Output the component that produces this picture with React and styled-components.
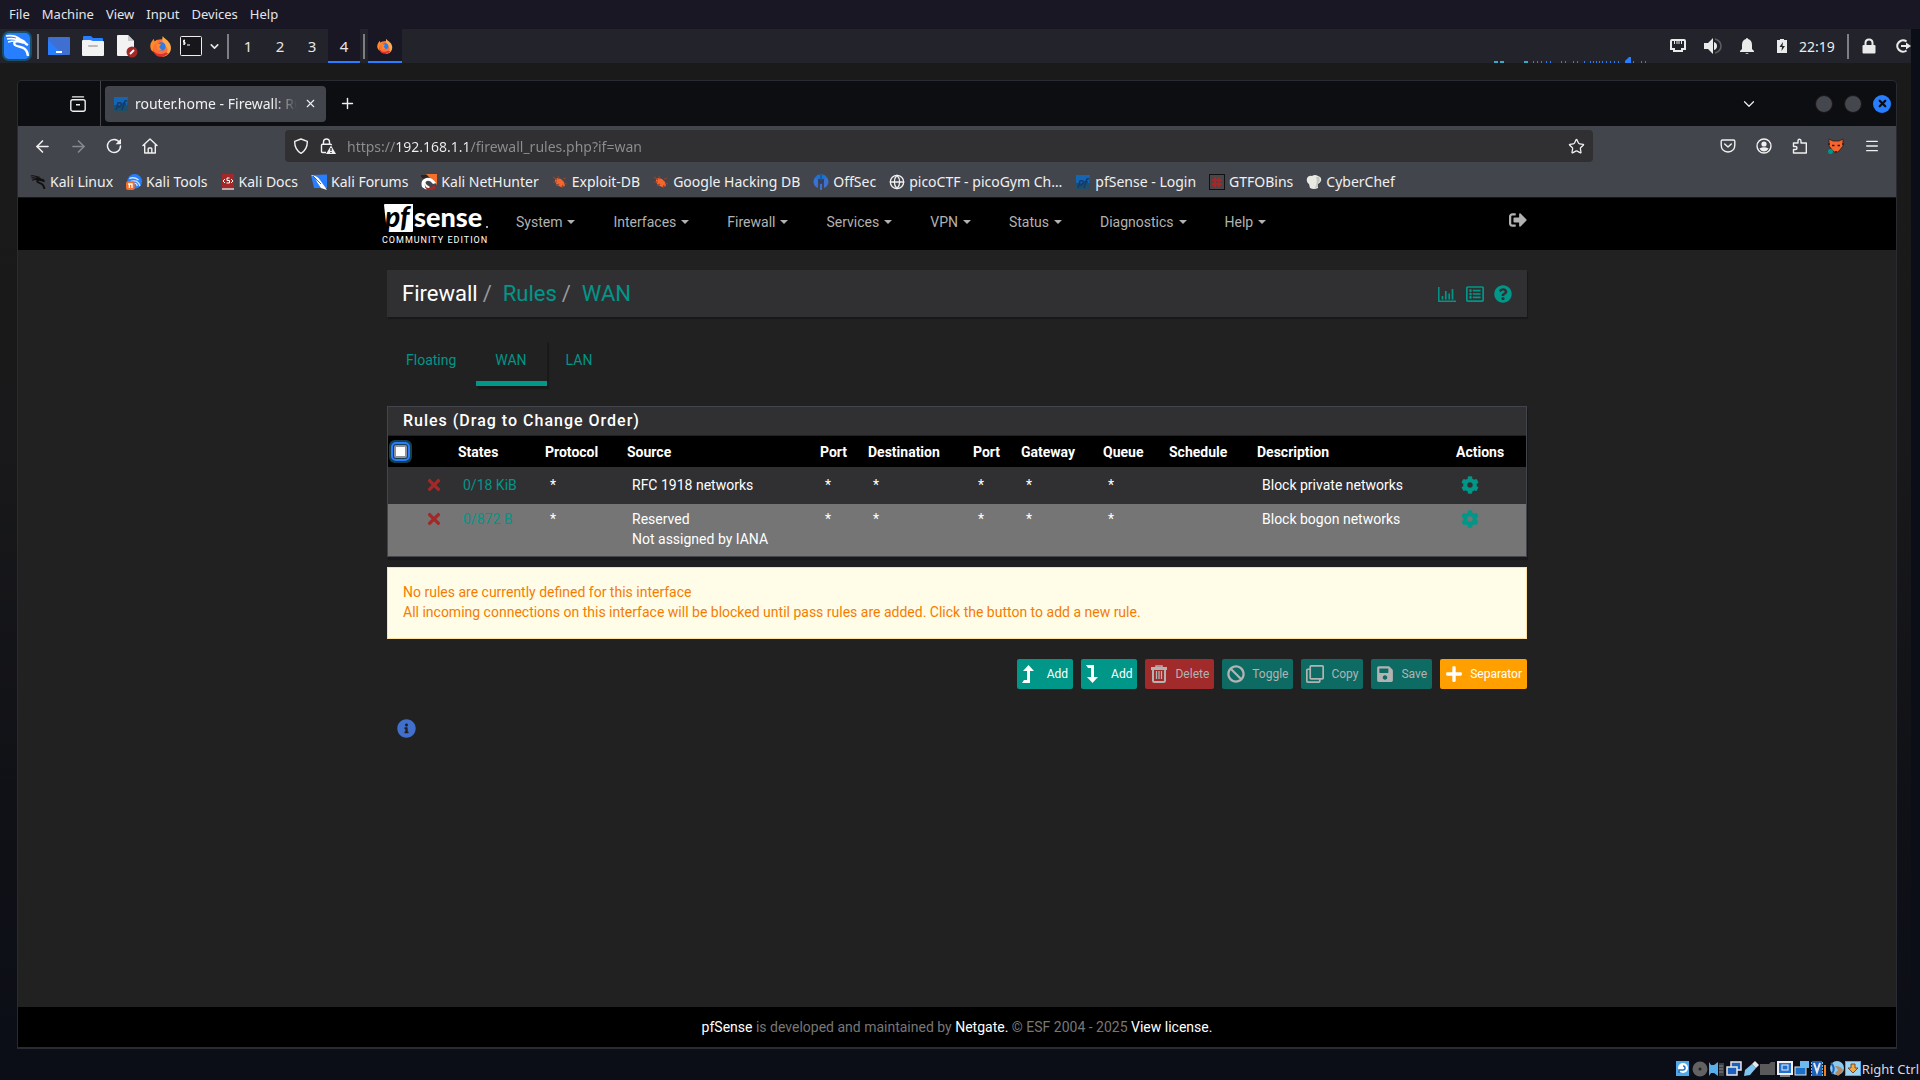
import React, { useState } from "react";
import styled, { createGlobalStyle } from "styled-components";
import {
  FaBan,
  FaCog,
  FaInfoCircle,
  FaPlus,
  FaQuestionCircle,
  FaRegClone,
  FaRegListAlt,
  FaSave,
  FaSignOutAlt,
  FaTimes,
} from "react-icons/fa";
import {
  ArrowLeft,
  ArrowRight,
  ChevronDown,
  Globe,
  Menu,
  Plus,
  Star,
  X,
} from "lucide-react";

const ui = `"Noto Sans", "Open Sans", sans-serif`;
const teal = "#009688";

const GlobalStyle = createGlobalStyle`
  * {
    box-sizing: border-box;
  }
  body {
    margin: 0;
    background: #0c0e17;
    font-family: ${ui};
  }
  button {
    font-family: inherit;
    border: 0;
    padding: 0;
    background: none;
    color: inherit;
  }
  a {
    text-decoration: none;
    color: inherit;
  }
`;

const Host = styled.div`
  display: flex;
  flex-direction: column;
  min-height: 100vh;
`;

const MenuBar = styled.nav`
  display: flex;
  gap: 12px;
  align-items: center;
  height: 29px;
  padding: 0 9px 2px;
  background: #191724;
  color: #e4e4e8;

  button {
    font-size: 13px;
  }
`;

const Guest = styled.div`
  display: flex;
  flex-direction: column;
  flex: 1;
  margin-right: 9px;
  background: linear-gradient(#1a1a1a, #19191b 40%, #101116 75%, #0c0e17);
`;

/* ---------- panel of the desktop ---------- */

const Panel = styled.div`
  display: flex;
  height: 34px;
  background: #23232b;
  color: #ececec;
  overflow: hidden;
`;

const PanelCell = styled.button`
  display: flex;
  flex: none;
  align-items: center;
  justify-content: ${(p) => (p.$end ? "flex-end" : "center")};
  width: ${(p) => p.$w || 34}px;
  font-size: 15px;
  color: #e6e6e6;
  background: ${(p) => (p.$active ? "#191724" : "none")};
  border-bottom: 2px solid ${(p) => (p.$active ? "#277fff" : "transparent")};
  border-top: 2px solid transparent;
`;

const PanelRule = styled.span`
  flex: none;
  width: 2px;
  height: 25px;
  margin: 5px 3px;
  background: #7d7f83;
`;

const Grow = styled.span`
  flex: 1;
`;

const Graph = styled.svg`
  align-self: flex-end;
  margin-right: 5px;
`;

const Clock = styled.time`
  width: 45px;
  align-self: center;
  font-size: 14px;
  white-space: nowrap;
`;

/* ---------- browser ---------- */

const Browser = styled.section`
  display: flex;
  flex-direction: column;
  flex: 1;
  margin: 17px 14px 0 17px;
  border: 1px solid #2a2b32;
  border-bottom-width: 2px;
  border-radius: 5px 5px 0 0;
  overflow: hidden;
  background: #212121;
`;

const TabStrip = styled.div`
  display: flex;
  align-items: center;
  height: 45px;
  background: #0d0e11;
  color: #f0f0f0;
`;

const TabsOverview = styled.button`
  display: flex;
  align-items: center;
  justify-content: flex-end;
  width: 83px;
  height: 45px;
  padding-right: 14px;
  border-right: 1px solid #45464c;
`;

const Tab = styled.div`
  display: flex;
  align-items: center;
  width: 221px;
  height: 36px;
  margin-left: 4px;
  padding: 0 9px 0 8px;
  gap: 6px;
  border-radius: 4px;
  background: #43454d;
`;

const TabTitle = styled.span`
  flex: 1;
  overflow: hidden;
  white-space: nowrap;
  font-size: 14px;
  mask-image: linear-gradient(to right, #000 85%, transparent);
`;

const IconButton = styled.button`
  display: flex;
  align-items: center;
  justify-content: center;
  width: ${(p) => p.$w || 36}px;
  height: 32px;
  opacity: ${(p) => (p.$dim ? 0.4 : 1)};
`;

const WindowButtons = styled.div`
  display: flex;
  gap: 11px;
  padding: 0 5px 0 57px;
`;

const WindowButton = styled.button`
  display: flex;
  align-items: center;
  justify-content: center;
  width: 18px;
  height: 18px;
  border-radius: 50%;
  border: ${(p) => (p.$close ? 0 : "1px solid #1b1413")};
  background: ${(p) => (p.$close ? "#277fff" : "#45474f")};
  color: #0d0e11;
`;

const Toolbar = styled.div`
  display: flex;
  align-items: center;
  height: 40px;
  padding: 0 6px;
  background: #43454d;
  color: #f0f0f0;
`;

const UrlBar = styled.label`
  display: flex;
  flex: 1;
  align-items: center;
  height: 32px;
  margin: 0 117px;
  padding: 0 8px;
  gap: 11px;
  border-radius: 4px;
  background: #303032;
`;

/* host name bright, the rest of the address dim */
const UrlInput = styled.input`
  flex: 1;
  min-width: 0;
  height: 32px;
  padding: 0;
  border: 0;
  outline: 0;
  font-family: ${ui};
  font-size: 14px;
  color: #f0f0f0;
  background: linear-gradient(
    to right,
    #8e8e90 49px,
    #f0f0f0 49px,
    #f0f0f0 123px,
    #8e8e90 123px
  );
  background-clip: text;
  -webkit-text-fill-color: transparent;
`;

const Bookmarks = styled.nav`
  display: flex;
  align-items: center;
  gap: 13px;
  height: 32px;
  padding: 0 12px;
  border-bottom: 1px solid #15161a;
  background: #43454d;
  color: #f0f0f0;
  font-size: 14px;
  white-space: nowrap;
`;

const Bookmark = styled.a`
  display: flex;
  align-items: center;
  gap: 4px;
`;

/* ---------- web page ---------- */

const Page = styled.div`
  display: flex;
  flex-direction: column;
  flex: 1;
  font-family: Roboto, sans-serif;
  font-size: 14px;
  line-height: 20px;
  color: #fff;
`;

const TopNav = styled.header`
  height: 52px;
  background: #000;
  color: #b2b2b2;
`;

const NavInner = styled.div`
  display: flex;
  align-items: center;
  max-width: 1150px;
  height: 48px;
  margin: 0 auto;
  padding-right: 5px;
`;

const Brand = styled.a`
  display: block;
  width: 110px;
  height: 46px;
  margin-right: 24px;
`;

const NavItems = styled.nav`
  display: flex;
  flex: 1;
  gap: 38px;
`;

const NavItem = styled.button`
  display: flex;
  align-items: center;
  gap: 5px;
  font-size: 14px;
  line-height: 20px;
`;

const Caret = styled.span`
  width: 0;
  border: 4px solid transparent;
  border-top-color: currentColor;
  border-bottom: 0;
`;

const Container = styled.main`
  flex: 1;
  width: 100%;
  max-width: 1140px;
  margin: 0 auto;
  padding-top: 20px;
`;

const PageHeader = styled.header`
  display: flex;
  align-items: center;
  height: 47px;
  padding: 0 15px;
  background: #303033;
  box-shadow: 1px 2px 1px #181818;
`;

const Crumbs = styled.ol`
  display: flex;
  flex: 1;
  margin: 0;
  padding: 0;
  list-style: none;
  font-size: 22px;
  line-height: 26px;
  color: ${teal};

  li:first-child {
    color: #fff;
  }
  li + li::before {
    content: "/";
    padding: 0 11px 0 5px;
    color: #999;
  }
`;

const HeaderLinks = styled.div`
  display: flex;
  gap: 10px;
  color: ${teal};

  a {
    display: flex;
  }
`;

const Tabs = styled.nav`
  display: flex;
  margin: 23px 0 20px;
`;

const TabLink = styled.a`
  height: 46px;
  padding: 10px 20px 0 19px;
  color: ${teal};
  border-bottom: 5px solid ${(p) => (p.$active ? teal : "transparent")};
  box-shadow: ${(p) => (p.$active ? "2px 3px 1px #191919" : "none")};
`;

const RulesPanel = styled.section`
  border: 1px solid #43454d;
  background: #303033;
  box-shadow: 1px 3px 1px #18181a;
`;

const PanelTitle = styled.h2`
  margin: 0;
  height: 29px;
  padding: 0 15px;
  border-bottom: 1px solid #212121;
  font-size: 16px;
  font-weight: 500;
  line-height: 27px;
  letter-spacing: 1px;
`;

const RulesTable = styled.table`
  width: 100%;
  table-layout: fixed;
  border-collapse: collapse;

  th {
    height: 31px;
    padding: 0 5px;
    background: #000;
    text-align: left;
    font-weight: 700;
  }
  td {
    height: 37px;
    padding: 8px 5px 7px 10px;
    vertical-align: top;
    white-space: nowrap;
  }
  td:nth-child(2) {
    padding-left: 0;
    color: #a52828;
  }
  tbody tr:nth-child(even) {
    background: #757575;
  }
  tbody tr:nth-child(even) td {
    padding-top: 5px;
  }
  td svg {
    display: block;
    margin-top: 1px;
  }
  td a {
    color: ${teal};
  }
`;

const CheckAll = styled.input`
  appearance: none;
  display: block;
  width: 13px;
  height: 13px;
  margin: 0 0 0 1px;
  border: 2px solid #8f8f9d;
  border-radius: 2px;
  background: #fff;
  outline: 2px solid #277fff;
  outline-offset: 1px;
  box-shadow: 0 0 0 5px #173f52;
`;

const Alert = styled.div`
  margin-top: 10px;
  padding: 14px 15px 16px;
  border: 1px solid #ffe0a3;
  background: #fffde7;
  color: #f57c00;

  p {
    margin: 0;
  }
`;

const Actions = styled.div`
  display: flex;
  justify-content: flex-end;
  gap: 8px;
  margin-top: 20px;
`;

const ActionButton = styled.button`
  display: flex;
  align-items: center;
  height: 30px;
  padding: 0 5px;
  border-radius: 2px;
  font-size: 12px;
  background: ${(p) => p.$bg};
  color: ${(p) => (p.disabled ? "#b3b3b3" : "#fff")};

  svg {
    flex: none;
    width: 18px;
    height: 18px;
    margin-right: 7px;
  }
`;

const InfoButton = styled.button`
  display: flex;
  margin: 30px 10px;
  color: #4070cc;
`;

const Footer = styled.footer`
  height: 40px;
  background: #000;
  color: #777;
  text-align: center;
  line-height: 40px;

  a {
    color: #fff;
  }
`;

const StatusBar = styled.footer`
  display: flex;
  align-items: center;
  justify-content: flex-end;
  gap: 1px;
  height: 31px;
  padding: 9px 1px 0;
  color: #d8d8dc;
  font-size: 13px;
`;

/* ---------- drawings ---------- */

const Dragon = ({ size = 16, color = "#fff" }) => (
  <svg width={size} height={size} viewBox="0 0 24 24" fill="none" stroke={color}>
    <path d="M1 3c4-1 8 0 12 2M2 6c4-1 7 0 10 1M3 9.500c3-1.500 5-1.500 8-1" strokeWidth="1.800" />
    <path d="M10 6c4 0 7 2 9 4l3 1M18 9.500c-4-1-8-1-7 2 1 3 10 0 10.500 11" strokeWidth="2.800" />
    <path d="M14 4l-2 3M18 8l3 0" strokeWidth="1.400" />
  </svg>
);

const Firefox = ({ size }) => (
  <svg width={size} height={size} viewBox="0 0 24 24">
    <circle cx="12" cy="13.500" r="9" fill="#ff7139" />
    <path d="M14 1c1 3 6 4 8 9 3 7-2 14-10 14 7-2 9-8 5-12-2-3-5-5-3-11z" fill="#ffa94d" />
    <path d="M2 7l2-3 1 3 3-2v3c-4 2-6 6-3 11C0 18-1 11 2 7z" fill="#ff8a2a" />
    <path d="M3 16c3 5 9 6 14 3l3 1c-5 6-15 5-17-4z" fill="#e0312f" />
    <circle cx="12.500" cy="12.500" r="4.500" fill="#2f7bea" />
    <path d="M7 9l5 1-2 3 3 4-5-1z" fill="#ff8a2a" />
  </svg>
);

const KaliMenu = () => (
  <svg width="30" height="30" viewBox="0 0 30 30">
    <rect x="0" y="0" width="30" height="30" rx="7" fill="#17506b" />
    <rect x="2" y="2" width="26" height="26" rx="5" fill="#277fff" />
    <g fill="none" stroke="#fff">
      <path d="M4 5c6-1 10 0 14 3M5 8c5-1 8 0 11 1M6 11c3-1 5-1 8-1" strokeWidth="1.700" />
      <path d="M14 8c5 0 8 2 10 5l2 1M22 12c-6-3-12-2-9 2 3 3 12 0 13 11" strokeWidth="2.400" />
    </g>
  </svg>
);

const ShowDesktop = () => (
  <svg width="22" height="18" viewBox="0 0 22 18">
    <rect width="22" height="18" rx="1" fill="#3f6fd0" />
    <path d="M0 3l15 15H0z" fill="#277fff" />
    <rect x="8" y="14" width="6" height="2" fill="#fff" />
  </svg>
);

const Folder = () => (
  <svg width="22" height="20" viewBox="0 0 22 20">
    <path d="M1 1q0-1 1-1h7l2 2h9q1 0 1 1v5H1z" fill="#277fff" />
    <path d="M0 5q0-1 1-1h7l3 1h10q1 0 1 1v13q0 1-1 1H1q-1 0-1-1z" fill="#f3f3f3" />
    <rect x="6" y="9" width="10" height="2" rx="1" fill="#bbb" />
  </svg>
);

const TextEditor = () => (
  <svg width="22" height="24" viewBox="0 0 22 24">
    <path d="M1 2q0-1 1-1h10l6 6v14q0 1-1 1H2q-1 0-1-1z" fill="#f3f3f3" />
    <path d="M12 1l6 6h-6z" fill="#c9c9c9" />
    <circle cx="16" cy="18" r="5.500" fill="#a52828" />
    <path d="M14 20l4-4" stroke="#fff" strokeWidth="1.800" />
  </svg>
);

const Terminal = () => (
  <svg width="22" height="20" viewBox="0 0 22 20">
    <rect x="0.500" y="0.500" width="21" height="19" rx="1" fill="#17171b" stroke="#eee" />
    <path d="M5 4.500H3.500v1.800H5v1.800H3M4.200 3.500v5.500M7 9h3" stroke="#fff" fill="none" />
  </svg>
);

const Ethernet = () => (
  <svg width="16" height="14" viewBox="0 0 16 14">
    <path d="M2 1h12q1 0 1 1v8h-3v2H4v-2H1V2q0-1 1-1z" fill="none" stroke="#eaeaea" strokeWidth="2" />
    <path d="M4.500 2v3M7 2v3M9 2v3M11.500 2v3" stroke="#eaeaea" />
  </svg>
);

const Volume = () => (
  <svg width="18" height="16" viewBox="0 0 18 16">
    <path d="M0 5h4l5-5v16l-5-5H0z" fill="#eaeaea" />
    <path d="M10 4q3 1 3 4t-3 4z" fill="#eaeaea" />
    <path d="M11 1q6 2 6 7t-6 7" stroke="#5c5e64" strokeWidth="1.600" fill="none" />
  </svg>
);

const Bell = () => (
  <svg width="14" height="16" viewBox="0 0 14 16" fill="#eaeaea">
    <path d="M7 0q1 0 1 1 4 1 4 6v4l2 2v1H0v-1l2-2V7q0-5 4-6 0-1 1-1zM5 15h4l-2 1z" />
  </svg>
);

const Battery = () => (
  <svg width="10" height="14" viewBox="0 0 10 14">
    <path d="M3 0h4v1h3v13H0V1h3z" fill="#eaeaea" />
    <path d="M6 3L2.500 8H5l-.500 4L8 7H5.500z" fill="#23232b" />
  </svg>
);

const Lock = () => (
  <svg width="14" height="16" viewBox="0 0 14 16">
    <path d="M3.500 8V5q0-3.500 3.500-3.500T10.500 5v3" fill="none" stroke="#eaeaea" strokeWidth="2" />
    <rect x="0.500" y="7" width="13" height="8.500" rx="1" fill="#eaeaea" />
  </svg>
);

const PowerOff = () => (
  <svg width="15" height="14" viewBox="0 0 15 14" fill="none" stroke="#eaeaea" strokeWidth="2.200">
    <path d="M10.500 2.500A5.700 5.700 0 1 0 10.500 11.500M5 7h6" />
    <path d="M10 3.500L15 7l-5 3.500z" fill="#eaeaea" stroke="none" />
  </svg>
);

const ArchiveIcon = () => (
  <svg width="16" height="16" viewBox="0 0 16 16" fill="none" stroke="#f0f0f0" strokeWidth="1.400">
    <path d="M2.500 .9h11" strokeLinecap="round" />
    <rect x="0.800" y="3.700" width="14.400" height="11.500" rx="2" />
    <path d="M6 8.800h4" />
  </svg>
);

const PfFavicon = () => (
  <svg width="16" height="16" viewBox="0 0 16 16">
    <path d="M1 1h14L14 10H1z" fill="#1565b5" />
    <path d="M1 9h14v4q0 2-2 2H1z" fill="#1c4f68" />
    <path d="M3 14l2-7q4-1 3 2-1 3-4 2M9 14l2-7q1-3 3-2M9 8h4" stroke="#163a6a" strokeWidth="1.600" fill="none" />
  </svg>
);

const Reload = () => (
  <svg width="16" height="16" viewBox="0 0 16 16" fill="none" stroke="#f0f0f0" strokeWidth="1.500">
    <path d="M13.500 4.500A6.500 6.500 0 1 0 14.500 8" strokeLinecap="round" />
    <path d="M15 .8v5.400H9.600z" fill="#f0f0f0" stroke="none" />
  </svg>
);

const Home = () => (
  <svg width="16" height="16" viewBox="0 0 16 16" fill="none" stroke="#f0f0f0" strokeWidth="1.400">
    <path d="M1 7.500L8 1l7 6.500M2.700 6.500V15h10.600V6.500" strokeLinejoin="round" strokeLinecap="round" />
    <path d="M6.200 15v-4.200q0-.8.8-.8h2q.8 0 .8.8V15" />
  </svg>
);

const Shield = () => (
  <svg width="16" height="16" viewBox="0 0 16 16" fill="none" stroke="#f0f0f0" strokeWidth="1.400">
    <path d="M8 1l6.300 2.300q.3 8-6.300 12Q1.400 11.300 1.700 3.300z" strokeLinejoin="round" />
  </svg>
);

const LockWarning = () => (
  <svg width="16" height="16" viewBox="0 0 16 16" fill="none" stroke="#f0f0f0" strokeWidth="1.400">
    <path d="M3.500 6V4q0-3 3-3t3 3v2M6 14.500H2.500q-1 0-1-1V7.300q0-1 1-1h8q1 0 1 1" />
    <path d="M11 7.500l5 8.500H6z" fill="#f0f0f0" stroke="none" />
    <path d="M11 10v3M11 14v1" stroke="#303032" />
  </svg>
);

const Pocket = () => (
  <svg width="16" height="16" viewBox="0 0 16 16" fill="none" stroke="#f0f0f0" strokeWidth="1.400">
    <path d="M2.500 2h11q1.300 0 1.300 1.300V7q0 6.500-6.800 7Q1.200 13.500 1.200 7V3.300Q1.200 2 2.500 2z" />
    <path d="M4.700 6L8 9l3.300-3" strokeLinecap="round" strokeLinejoin="round" />
  </svg>
);

const Account = () => (
  <svg width="16" height="16" viewBox="0 0 16 16">
    <circle cx="8" cy="8" r="7" fill="none" stroke="#f0f0f0" strokeWidth="1.400" />
    <circle cx="8" cy="6" r="2.600" fill="#f0f0f0" />
    <path d="M3.500 10.500q4.500-2.500 9 0-1.500 3-4.500 3t-4.500-3z" fill="#f0f0f0" />
  </svg>
);

const Puzzle = () => (
  <svg width="16" height="16" viewBox="0 0 16 16" fill="none" stroke="#f0f0f0" strokeWidth="1.400">
    <path d="M1.500 5H6V3q0-1.800 1.500-1.800T9 3v2h5.300v10H1.500v-3.500h2q1.500 0 1.500-1.500t-1.500-1.500h-2z" strokeLinejoin="round" />
  </svg>
);

const FoxProxy = () => (
  <svg width="16" height="16" viewBox="0 0 16 16">
    <path d="M1 1l4 2h6l4-2v7l-4 5-3 2-3-2-4-5z" fill="#f8652c" stroke="#2b1d1a" strokeWidth=".8" />
    <path d="M0 6h2M14 6h2M4 7.500h2.500M9.500 7.500H12" stroke="#2b1d1a" strokeWidth="1.500" />
    <path d="M7 13h2l-1 2z" fill="#111" />
    <circle cx="2.500" cy="13.500" r="2.500" fill="#009688" />
  </svg>
);

const KaliTools = () => (
  <svg width="16" height="16" viewBox="0 0 24 24">
    <circle cx="13" cy="11" r="11" fill="#277fff" />
    <path d="M5 7c6-3 10-1 14 2M7 11c7-2 12 0 14 7M10 15c4-2 6-1 7 3" stroke="#cfe4ff" strokeWidth="2" fill="none" />
    <rect x="0" y="11" width="13" height="13" rx="3" fill="#f4702a" />
    <path d="M3 15h7M5 15v6M9 15v6" stroke="#fff" strokeWidth="2" />
  </svg>
);

const KaliDocs = () => (
  <svg width="14" height="16" viewBox="0 0 14 16">
    <path d="M1 0h12v14H2v1h11v1H1z" fill="#a52828" />
    <path d="M1 14h12v2H1z" fill="#c9a9a9" />
    <path d="M4 5l-2 2 2 2M8.500 4H6v2.500h2.500V9H5.500M10 5l2 2-2 2" stroke="#fff" fill="none" />
  </svg>
);

const KaliForums = () => (
  <svg width="16" height="16" viewBox="0 0 16 16">
    <path d="M0 1l16-.500V14H3z" fill="#277fff" />
    <path d="M0 1q7 1 9 5l5 7 2 3-6-2-4-6q-1-4-6-7z" fill="#fff" />
    <path d="M2 2l8 8" stroke="#1c3f77" strokeWidth=".8" />
  </svg>
);

const NetHunter = () => (
  <svg width="16" height="16" viewBox="0 0 16 16">
    <path d="M0 1h6l3 3-4 2-5-3z" fill="#2c2223" />
    <path d="M5 0h11v11z" fill="#f4702a" />
    <path d="M1 13Q-1 6 5 4q6-1 10 5l-3 1Q9 6 6 7t0 4l3 2q-2 3-5 2z" fill="#fff" />
    <path d="M4 10q0 4 4 4 3 0 5-3l2 3q-3 3-7 2-5-1-4-6z" fill="#a52828" />
  </svg>
);

const Ant = () => (
  <svg width="16" height="16" viewBox="0 0 16 16">
    <path d="M3 5l3-1 3 1 3 3 1 4-4 1-4-2-2-3z" fill="#f8652c" />
    <path d="M1 3l4 3M6 2l1 3M1 8h4M4 12l3-2M11 5l3-1M12 9l3 1M10 14l1-3" stroke="#8e4530" strokeWidth="1.200" />
  </svg>
);

const OffSec = () => (
  <svg width="16" height="16" viewBox="0 0 16 16">
    <path d="M5 14Q0 12 .5 7 2 1 7 .5L5 7z" fill="#3f6fd0" />
    <path d="M11 14q5-2 4.500-7Q14 1 9 .5L11 7z" fill="#3f6fd0" />
    <path d="M7 10h2v6H7z" fill="#3f6fd0" />
    <path d="M1 5Q3 1 8 .5 13 1 15 5l-4-1-3 2-3-2z" fill="#1475cf" />
    <path d="M8 1v7M5 5l2 4M11 5L9 9" stroke="#1d3f7c" fill="none" />
  </svg>
);

const GtfoBins = () => (
  <svg width="16" height="16" viewBox="0 0 16 16">
    <rect x="0.500" y="0.500" width="15" height="15" fill="#4c4548" stroke="#111" />
    <path d="M6 3v10M10 3v10M3 6h10M3 10h10" stroke="#a52828" strokeWidth="2" />
  </svg>
);

const ChefHat = () => (
  <svg width="16" height="16" viewBox="0 0 16 16">
    <path d="M3 10Q0 8 1 4q2-3 5-2 3-2 6 0 4 1 3 5-1 2-3 3v4q-4 2-8 0z" fill="#e9e9e4" />
    <path d="M10 3q2 5-1 11l3-1V9q3-2 1-6z" fill="#c3c3bf" />
  </svg>
);

const BarChart = () => (
  <svg width="18" height="18" viewBox="0 0 18 18" fill="none" stroke="currentColor">
    <path d="M.800 2v14.200H18" strokeWidth="1.500" />
    <path d="M4.500 14.500V11M7.800 14.500V6M11.200 14.500V8.500M14.500 14.500V4" strokeWidth="1.700" />
  </svg>
);

const TrashCan = () => (
  <svg viewBox="0 0 18 18" fill="none" stroke="currentColor">
    <path d="M6 2V1h6v1" strokeWidth="1.500" />
    <path d="M1 2h16v3H1z" fill="currentColor" stroke="none" />
    <path d="M3 5v10.500q0 1.500 1.500 1.500h9q1.500 0 1.500-1.500V5" strokeWidth="2" />
    <path d="M6.500 6v8M9 6v8M11.500 6v8" strokeWidth="1.300" />
  </svg>
);

const LevelUp = ({ down }) => (
  <svg viewBox="0 0 18 18" fill="currentColor">
    {down ? (
      <path d="M0 0h8v12h4l-5.500 6L1 12h4V3H2z" />
    ) : (
      <path d="M0 18h8V6h4L6.500 0 1 6h4v9H2z" />
    )}
  </svg>
);

const Logo = () => (
  <svg width="110" height="46" viewBox="0 0 110 46" fontFamily="Lato, sans-serif">
    <path d="M2 6q0-1 1-1h28v27q0 1-1 1H5z" fill="#fff" />
    <text x="3" y="28" fontSize="28" fontWeight="900" fontStyle="italic" fill="#000">
      pf
    </text>
    <text x="32" y="28" fontSize="27" fontWeight="900" fill="#fff">
      sense
    </text>
    <rect x="104" y="27" width="2" height="2" fill="#aaa" />
    <text x="0" y="44" fontSize="9" letterSpacing="1" fontFamily="Roboto, sans-serif" fill="#fff">
      COMMUNITY EDITION
    </text>
  </svg>
);

/* indicators of the virtual machine */
const Indicator = ({ children }) => (
  <svg width="16" height="16" viewBox="0 0 16 16">
    {children}
  </svg>
);

const indicators = [
  <>
    <rect x="1" width="13" height="15" fill="#4fa8ea" />
    <circle cx="8" cy="7" r="5" fill="#fff" />
    <path d="M8 5q2 0 2 2t-2 2H4v3" stroke="#2470bd" strokeWidth="1.500" fill="none" />
  </>,
  <>
    <circle cx="8" cy="8" r="7.500" fill="#626262" />
    <circle cx="8" cy="8" r="1.500" fill="#222" />
  </>,
  <>
    <path d="M0 1l2 3h3l4-3v14l-4-3H2l-2 3z" fill="#57aeea" />
    <path d="M10 2h5v13h-5z" fill="#3b4047" />
    <path d="M10 5h4M10 8h4M10 11h4" stroke="#888" />
  </>,
  <>
    <rect x="5" y="1" width="10" height="8" fill="#1c62bd" stroke="#e8e8e8" strokeWidth="1.500" />
    <rect x="1" y="6" width="10" height="8" fill="#1c62bd" stroke="#e8e8e8" strokeWidth="1.500" />
  </>,
  <>
    <path d="M1 15l1-6 7-6 4 4-6 7z" fill="#7cc5f2" />
    <path d="M9 3l3-3 4 4-3 3z" fill="#e8e8e8" />
  </>,
  <path key="f" d="M0 3h9l2-2h4v13H0z" fill="#5a5a5a" />,
  <>
    <rect x="1" y="1" width="14" height="12" fill="#2470d0" stroke="#eee" strokeWidth="2" />
    <rect x="5" y="4" width="6" height="5" fill="#2470d0" stroke="#eee" />
    <path d="M3 15h10" stroke="#eee" />
  </>,
  <>
    <rect x="1" y="6" width="11" height="8" fill="#1c70c8" stroke="#e8e8e8" />
    <path d="M6 0h9v7H6z" fill="#6cbcf0" />
  </>,
  <>
    <path d="M1 0h10v15H1z" fill="#1c62bd" />
    <path d="M3 2l3 9 3-9" stroke="#e8e8e8" strokeWidth="2" fill="none" />
    <path d="M.5 1v14M11.500 1v14" stroke="#6cbcf0" strokeDasharray="2 1" />
    <path d="M14 4v11" stroke="#f57c1a" strokeWidth="2" />
  </>,
  <>
    <circle cx="9" cy="7" r="7" fill="#8accf0" />
    <path d="M3 2q5 5 1 11" stroke="#1c62bd" strokeWidth="2" fill="none" />
    <path d="M7 5q7 0 8 5l-5 5-3-3 3-3z" fill="#b58a63" />
  </>,
  <>
    <rect x="0.500" y="0.500" width="15" height="14" fill="#9bd4f5" stroke="#4fa8ea" />
    <path d="M6 3h4v4h3l-5 5-5-5h3z" fill="#f5a742" stroke="#56351b" strokeWidth=".8" />
  </>,
];

/* ---------- data ---------- */

const hostMenus = ["File", "Machine", "View", "Input", "Devices", "Help"];

const bookmarks = [
  ["Kali Linux", <Dragon key="i" color="#111" />],
  ["Kali Tools", <KaliTools key="i" />],
  ["Kali Docs", <KaliDocs key="i" />],
  ["Kali Forums", <KaliForums key="i" />],
  ["Kali NetHunter", <NetHunter key="i" />],
  ["Exploit-DB", <Ant key="i" />],
  ["Google Hacking DB", <Ant key="i" />],
  ["OffSec", <OffSec key="i" />],
  ["picoCTF - picoGym Ch…", <Globe key="i" size={16} />],
  ["pfSense - Login", <PfFavicon key="i" />],
  ["GTFOBins", <GtfoBins key="i" />],
  ["CyberChef", <ChefHat key="i" />],
];

const pfMenus = [
  "System",
  "Interfaces",
  "Firewall",
  "Services",
  "VPN",
  "Status",
  "Diagnostics",
  "Help",
];

const columns = [
  ["", 37],
  ["", 28],
  ["States", 87],
  ["Protocol", 82],
  ["Source", 193],
  ["Port", 48],
  ["Destination", 105],
  ["Port", 48],
  ["Gateway", 82],
  ["Queue", 66],
  ["Schedule", 88],
  ["Description", 199],
  ["Actions", 75],
];

const rules = [
  {
    states: "0/18 KiB",
    source: ["RFC 1918 networks"],
    description: "Block private networks",
  },
  {
    states: "0/872 B",
    source: ["Reserved", "Not assigned by IANA"],
    description: "Block bogon networks",
  },
];

const actions = [
  { label: "Add", icon: <LevelUp />, bg: teal },
  { label: "Add", icon: <LevelUp down />, bg: teal },
  { label: "Delete", icon: <TrashCan />, bg: "#a12a2a", disabled: true },
  { label: "Toggle", icon: <FaBan />, bg: "#0e6b63", disabled: true },
  { label: "Copy", icon: <FaRegClone />, bg: "#0e6b63", disabled: true },
  { label: "Save", icon: <FaSave />, bg: "#0e6b63", disabled: true },
  { label: "Separator", icon: <FaPlus />, bg: "#ffa000" },
];

const load = [47, 51, 55, 60, 64, 75, 79, 87, 91, 98, 104, 107, 110, 113, 116, 120, 124, 128, 132, 141, 147, 155, 159];

function DesktopPanel() {
  return (
    <Panel>
      <PanelCell aria-label="Applications">
        <KaliMenu />
      </PanelCell>
      <PanelRule />
      <PanelCell aria-label="Show desktop">
        <ShowDesktop />
      </PanelCell>
      <PanelCell aria-label="Files">
        <Folder />
      </PanelCell>
      <PanelCell aria-label="Text editor">
        <TextEditor />
      </PanelCell>
      <PanelCell aria-label="Firefox">
        <Firefox size={22} />
      </PanelCell>
      <PanelCell $w={26} aria-label="Terminal">
        <Terminal />
      </PanelCell>
      <PanelCell $w={20} aria-label="More terminals">
        <ChevronDown size={13} strokeWidth={3} />
      </PanelCell>
      <PanelRule />
      {[1, 2, 3, 4].map((n) => (
        <PanelCell key={n} $w={32} $active={n === 4}>
          {n}
        </PanelCell>
      ))}
      <PanelRule />
      <PanelCell $active aria-label="Firefox window">
        <Firefox size={16} />
      </PanelCell>
      <Grow />
      <Graph width="162" height="6" viewBox="0 0 162 6">
        <path d="M0 5h4M6 5h4M30 5h4" stroke="#3ba7c9" strokeWidth="2" />
        {load.map((x) => (
          <rect key={x} x={x - 8} y="4" width="1" height="2" fill="#277fff" />
        ))}
        <path d="M131 6V4l2-2 2-2h2v6z" fill="#277fff" />
      </Graph>
      <PanelCell aria-label="Network">
        <Ethernet />
      </PanelCell>
      <PanelCell $w={35} aria-label="Volume">
        <Volume />
      </PanelCell>
      <PanelCell aria-label="Notifications">
        <Bell />
      </PanelCell>
      <PanelCell $w={35} aria-label="Battery">
        <Battery />
      </PanelCell>
      <Clock>22:19</Clock>
      <PanelRule />
      <PanelCell aria-label="Lock screen">
        <Lock />
      </PanelCell>
      <PanelCell $w={25} $end aria-label="Log out">
        <PowerOff />
      </PanelCell>
    </Panel>
  );
}

function BrowserChrome() {
  const [url, setUrl] = useState(
    "https://192.168.1.1/firewall_rules.php?if=wan"
  );

  return (
    <>
      <TabStrip>
        <TabsOverview aria-label="Tab overview">
          <ArchiveIcon />
        </TabsOverview>
        <Tab>
          <PfFavicon />
          <TabTitle>router.home - Firewall: Rules</TabTitle>
          <IconButton $w={14} aria-label="Close tab">
            <X size={13} />
          </IconButton>
        </Tab>
        <IconButton $w={42} aria-label="New tab">
          <Plus size={17} />
        </IconButton>
        <Grow />
        <IconButton $w={18} aria-label="List all tabs">
          <ChevronDown size={18} strokeWidth={1.600} />
        </IconButton>
        <WindowButtons>
          <WindowButton aria-label="Minimize" />
          <WindowButton aria-label="Maximize" />
          <WindowButton $close aria-label="Close">
            <X size={11} strokeWidth={5} />
          </WindowButton>
        </WindowButtons>
      </TabStrip>
      <Toolbar>
        <IconButton aria-label="Back">
          <ArrowLeft size={19} />
        </IconButton>
        <IconButton $dim aria-label="Forward">
          <ArrowRight size={19} />
        </IconButton>
        <IconButton aria-label="Reload">
          <Reload />
        </IconButton>
        <IconButton aria-label="Home">
          <Home />
        </IconButton>
        <UrlBar>
          <Shield />
          <LockWarning />
          <UrlInput
            aria-label="Address"
            value={url}
            onChange={(e) => setUrl(e.target.value)}
          />
          <Star size={17} strokeWidth={1.800} />
        </UrlBar>
        <IconButton aria-label="Save to Pocket">
          <Pocket />
        </IconButton>
        <IconButton aria-label="Account">
          <Account />
        </IconButton>
        <IconButton aria-label="Extensions">
          <Puzzle />
        </IconButton>
        <IconButton aria-label="FoxyProxy">
          <FoxProxy />
        </IconButton>
        <IconButton aria-label="Open menu">
          <Menu size={16} />
        </IconButton>
      </Toolbar>
      <Bookmarks>
        {bookmarks.map(([name, icon]) => (
          <Bookmark key={name} href="#">
            {icon}
            {name}
          </Bookmark>
        ))}
      </Bookmarks>
    </>
  );
}

function RuleRow({ rule }) {
  return (
    <tr>
      <td />
      <td>
        <FaTimes size={18} />
      </td>
      <td>
        <a href="#">{rule.states}</a>
      </td>
      <td>*</td>
      <td>
        {rule.source.map((line) => (
          <div key={line}>{line}</div>
        ))}
      </td>
      <td>*</td>
      <td>*</td>
      <td>*</td>
      <td>*</td>
      <td>*</td>
      <td />
      <td>{rule.description}</td>
      <td>
        <a href="#" aria-label="Edit">
          <FaCog size={18} />
        </a>
      </td>
    </tr>
  );
}

function Rules() {
  const [all, setAll] = useState(false);

  return (
    <RulesPanel>
      <PanelTitle>Rules (Drag to Change Order)</PanelTitle>
      <RulesTable>
        <colgroup>
          {columns.map(([, width], i) => (
            <col key={i} width={width} />
          ))}
        </colgroup>
        <thead>
          <tr>
            {columns.map(([name], i) => (
              <th key={i}>
                {i === 0 ? (
                  <CheckAll
                    type="checkbox"
                    aria-label="Select all rules"
                    checked={all}
                    onChange={() => setAll(!all)}
                  />
                ) : (
                  name
                )}
              </th>
            ))}
          </tr>
        </thead>
        <tbody>
          {rules.map((rule) => (
            <RuleRow key={rule.description} rule={rule} />
          ))}
        </tbody>
      </RulesTable>
    </RulesPanel>
  );
}

export default function App() {
  return (
    <Host>
      <GlobalStyle />
      <MenuBar>
        {hostMenus.map((name) => (
          <button key={name}>{name}</button>
        ))}
      </MenuBar>
      <Guest>
        <DesktopPanel />
        <Browser>
          <BrowserChrome />
          <Page>
            <TopNav>
              <NavInner>
                <Brand href="#" aria-label="pfSense">
                  <Logo />
                </Brand>
                <NavItems>
                  {pfMenus.map((name) => (
                    <NavItem key={name}>
                      {name}
                      <Caret />
                    </NavItem>
                  ))}
                </NavItems>
                <a href="#" aria-label="Log out">
                  <FaSignOutAlt size={18} />
                </a>
              </NavInner>
            </TopNav>
            <Container>
              <PageHeader>
                <Crumbs>
                  <li>Firewall</li>
                  <li>
                    <a href="#">Rules</a>
                  </li>
                  <li>
                    <a href="#">WAN</a>
                  </li>
                </Crumbs>
                <HeaderLinks>
                  <a href="#" aria-label="Status">
                    <BarChart />
                  </a>
                  <a href="#" aria-label="Log">
                    <FaRegListAlt size={18} />
                  </a>
                  <a href="#" aria-label="Help">
                    <FaQuestionCircle size={18} />
                  </a>
                </HeaderLinks>
              </PageHeader>
              <Tabs>
                <TabLink href="#">Floating</TabLink>
                <TabLink href="#" $active>
                  WAN
                </TabLink>
                <TabLink href="#">LAN</TabLink>
              </Tabs>
              <Rules />
              <Alert>
                <p>No rules are currently defined for this interface</p>
                <p>
                  All incoming connections on this interface will be blocked
                  until pass rules are added. Click the button to add a new
                  rule.
                </p>
              </Alert>
              <Actions>
                {actions.map((a, i) => (
                  <ActionButton key={i} $bg={a.bg} disabled={a.disabled}>
                    {a.icon}
                    {a.label}
                  </ActionButton>
                ))}
              </Actions>
              <InfoButton aria-label="Info">
                <FaInfoCircle size={19} />
              </InfoButton>
            </Container>
            <Footer>
              <a href="#">pfSense</a> is developed and maintained by{" "}
              <a href="#">Netgate.</a> © ESF 2004 - 2025{" "}
              <a href="#">View license.</a>
            </Footer>
          </Page>
        </Browser>
      </Guest>
      <StatusBar>
        {indicators.map((drawing, i) => (
          <Indicator key={i}>{drawing}</Indicator>
        ))}
        <span>Right Ctrl</span>
      </StatusBar>
    </Host>
  );
}
